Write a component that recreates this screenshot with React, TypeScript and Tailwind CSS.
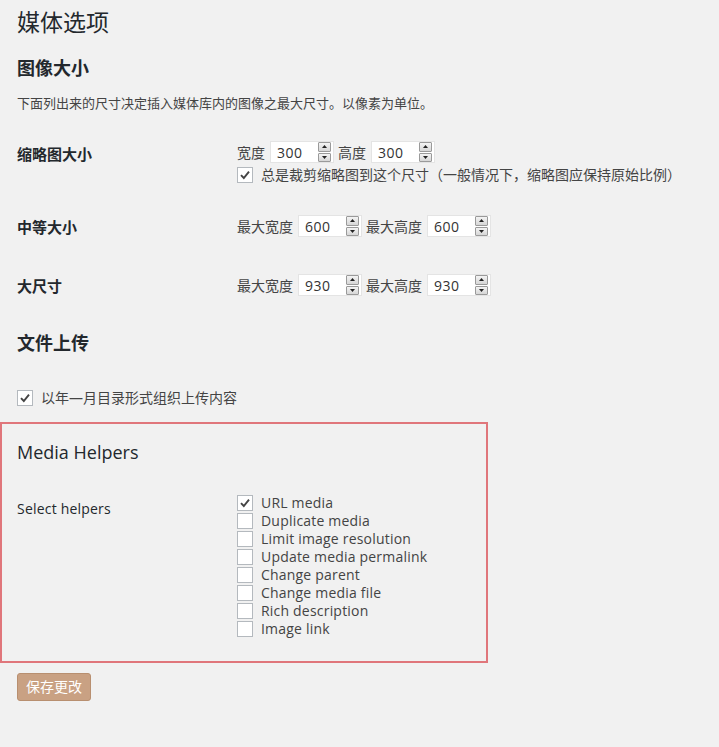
import React from "react";

const font = { fontFamily: '"Open Sans", "Noto Sans CJK SC", sans-serif' };

const Spinner = () => (
    <div className="flex flex-col w-[13px] h-[20px] gap-[1px]">
        <div className="flex-1 flex items-center justify-center border border-[#9a9a9a] bg-gradient-to-b from-[#f4f4f4] to-[#d6d6d6] rounded-[1px]">
            <svg width="5" height="3" viewBox="0 0 5 3"><path d="M0 3 L2.5 0 L5 3 Z" fill="#222" /></svg>
        </div>
        <div className="flex-1 flex items-center justify-center border border-[#9a9a9a] bg-gradient-to-b from-[#f4f4f4] to-[#d6d6d6] rounded-[1px]">
            <svg width="5" height="3" viewBox="0 0 5 3"><path d="M0 0 L2.5 3 L5 0 Z" fill="#222" /></svg>
        </div>
    </div>
);

const NumberBox = ({ value }: { value: string }) => (
    <div className="flex items-center justify-between w-[64px] h-[22px] bg-white border border-[#e4e4e4] pl-[6px] pr-[2px] text-[14px] text-[#333]">
        <span className="tracking-[0.5px]">{value}</span>
        <Spinner />
    </div>
);

const Checkbox = ({ checked }: { checked?: boolean }) => (
    <div className="w-[16px] h-[16px] shrink-0 bg-white border border-[#b4b9be] flex items-center justify-center">
        {checked && (
            <svg width="12" height="12" viewBox="0 0 12 12">
                <path d="M2 6.2 L4.8 9 L10 2.6" fill="none" stroke="#444" strokeWidth="1.9" />
            </svg>
        )}
    </div>
);

const SizeField = ({ label, value }: { label: string; value: string }) => (
    <div className="flex items-center gap-[5px]">
        <span>{label}</span>
        <NumberBox value={value} />
    </div>
);

const helpers = [
    "URL media",
    "Duplicate media",
    "Limit image resolution",
    "Update media permalink",
    "Change parent",
    "Change media file",
    "Rich description",
    "Image link",
];

export default function App() {
    return (
        <div className="min-h-[747px] w-[719px] bg-[#f1f1f1] text-[#444]" style={font}>
            <div className="pl-[17px] pt-[8px]">
                <h1 className="text-[23px] leading-[29px] text-[#23282d]">媒体选项</h1>

                <h2 className="mt-[19px] text-[18px] leading-[24px] font-bold text-[#23282d]">图像大小</h2>
                <p className="mt-[13px] text-[13px] leading-[20px]">下面列出来的尺寸决定插入媒体库内的图像之最大尺寸。以像素为单位。</p>

                {/* thumbnail */}
                <div className="flex mt-[28px]">
                    <div className="w-[220px] pt-[2px] text-[15px] leading-[22px] font-bold text-[#23282d]">缩略图大小</div>
                    <div className="flex flex-col gap-[4px] text-[14px]">
                        <div className="flex items-center gap-[4px]">
                            <SizeField label="宽度" value="300" />
                            <SizeField label="高度" value="300" />
                        </div>
                        <div className="flex items-center gap-[8px] leading-[16px]">
                            <Checkbox checked />
                            <span>总是裁剪缩略图到这个尺寸（一般情况下，缩略图应保持原始比例）</span>
                        </div>
                    </div>
                </div>

                <div className="flex mt-[31px]">
                    <div className="w-[220px] pt-[2px] text-[15px] leading-[22px] font-bold text-[#23282d]">中等大小</div>
                    <div className="flex items-center gap-[4px] text-[14px]">
                        <SizeField label="最大宽度" value="600" />
                        <SizeField label="最大高度" value="600" />
                    </div>
                </div>

                <div className="flex mt-[35px]">
                    <div className="w-[220px] pt-[2px] text-[15px] leading-[22px] font-bold text-[#23282d]">大尺寸</div>
                    <div className="flex items-center gap-[4px] text-[14px]">
                        <SizeField label="最大宽度" value="930" />
                        <SizeField label="最大高度" value="930" />
                    </div>
                </div>

                <h2 className="mt-[34px] text-[18px] leading-[24px] font-bold text-[#23282d]">文件上传</h2>

                <div className="flex items-center gap-[8px] mt-[35px] text-[14px] leading-[16px]">
                    <Checkbox checked />
                    <span>以年—月目录形式组织上传内容</span>
                </div>
            </div>

            {/* highlighted plugin section */}
            <div className="mt-[16px] w-[488px] border-2 border-[#e0767b] pl-[15px] pt-[16px] pb-[24px]">
                <h2 className="text-[18px] leading-[24px] text-[#23282d]">Media Helpers</h2>
                <div className="flex mt-[31px]">
                    <div className="w-[220px] pt-[5px] text-[14px] leading-[18px] tracking-[0.2px] text-[#23282d]">Select helpers</div>
                    <div className="flex flex-col gap-[2px]">
                        {helpers.map((h, i) => (
                            <div key={h} className="flex items-center gap-[8px] h-[16px] text-[14px] tracking-[0.2px]">
                                <Checkbox checked={i === 0} />
                                <span className="leading-[16px]">{h}</span>
                            </div>
                        ))}
                    </div>
                </div>
            </div>

            <div className="pl-[17px] mt-[10px]">
                <button className="h-[28px] w-[74px] rounded-[3px] bg-[#c9a183] border border-[#b88f70] text-white text-[14px] leading-[26px]">
                    保存更改
                </button>
            </div>
        </div>
    );
}
